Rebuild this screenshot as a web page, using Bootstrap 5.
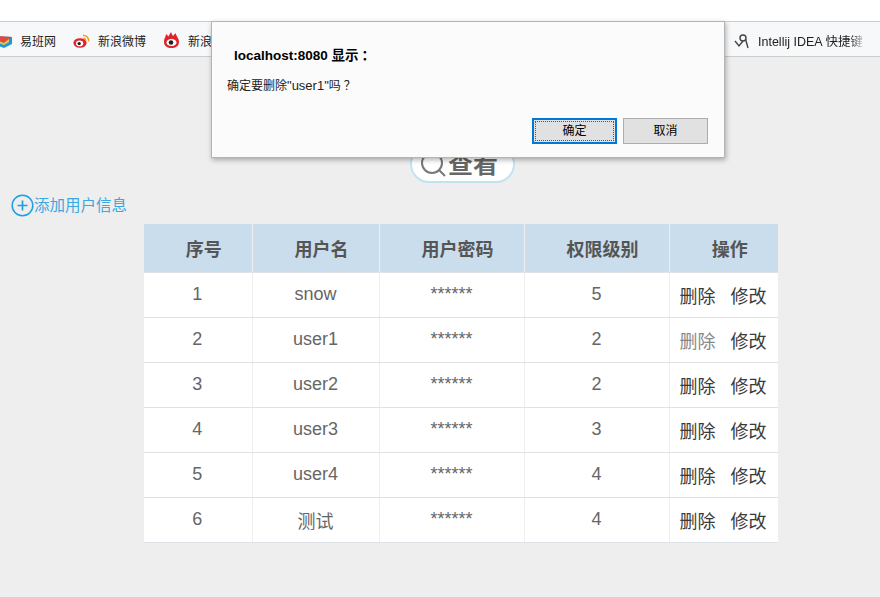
<!DOCTYPE html>
<html lang="zh">
<head>
<meta charset="utf-8">
<title>用户信息</title>
<link href="https://cdn.jsdelivr.net/npm/bootstrap@5.3.0/dist/css/bootstrap.min.css" rel="stylesheet">
<style>
html,body{height:100%}
body{background:#eee;font-family:"Liberation Sans","Noto Sans CJK SC",sans-serif;overflow:hidden;color:#555;width:880px;height:597px;position:relative}
.topstrip{height:21px;background:#fff}
.bmbar{height:36px;background:#f7f8fa;border-top:1px solid #ccc;border-bottom:1px solid #ccc;font-size:12px;color:#222;overflow:hidden;white-space:nowrap;position:relative}
.bmitem{position:absolute;top:0;height:34px;display:flex;align-items:center;gap:8px;padding-top:6px}
.bmitem svg{margin-top:-3px}
.bm1{left:-4px;gap:8px}.bm2{left:73px}.bm3{left:163px}.bm4{left:734px}
.idea{display:block;width:108px;overflow:hidden;font-size:12.500px;-webkit-mask-image:linear-gradient(to right,#000 85%,transparent 100%);mask-image:linear-gradient(to right,#000 85%,transparent 100%)}
.searchrow{padding-top:88px;height:146px}
.searchpill{margin-left:410px;width:105px;height:38px;border:2px solid #bfe4ef;border-radius:20px;background:#fff;color:#666;font-size:25px;font-weight:700;line-height:35px;display:flex;align-items:center;padding-left:8px;gap:1px}
.addlink{position:absolute;left:11px;top:194px;color:#3aa8e0;font-size:15.500px;line-height:22px;display:flex;align-items:center;gap:0;text-decoration:none}
.tblwrap{position:absolute;left:144px;top:224px;width:634px}
.utable{width:634px;margin:0;table-layout:fixed;border-collapse:collapse;background:#fff;color:#666;font-size:18px}
.utable th{background:#c9dded;height:48px;font-size:18px;font-weight:700;color:#555;text-align:center;vertical-align:middle;border-left:1px solid #eee;padding:5px 0 0 12px}
.utable td{height:45px;text-align:center;vertical-align:middle;border-left:1px solid #eee;border-top:1px solid #eee;padding:0 0 1px}
.utable th:first-child,.utable td:first-child{border-left:0}
.utable td.col1{padding-right:1px}
.utable td.cjkcell{padding:5px 0 0}
.utable td.ops{text-align:left;padding:5px 0 0 10px;color:#3a3a3a;white-space:nowrap}
.opgap{margin-left:15px}
.dimlink{color:#888}
.dlg{position:absolute;left:211px;top:21px;width:514px;height:137px;background:#fbfbfb;border:1px solid #b4b4b4;box-shadow:1px 2px 5px rgba(0,0,0,.3);color:#111;font-size:12px}
.dlgtitle{font-size:13.500px;font-weight:700;padding:25px 0 0 22px;line-height:18px;color:#000}
.dlgmsg{padding:12px 0 0 15px;line-height:18px;color:#222}
.latinmsg{font-size:13px;line-height:0}
.cjkpunct{font-family:"Noto Sans CJK TC",sans-serif;line-height:0;padding-left:3px}
.dlgbtns{position:absolute;right:16px;top:96px;display:flex;gap:6px}
.nbtn{width:85px;height:26px;background:#e1e1e1;border:1px solid #adadad;font-size:12px;color:#000;display:flex;align-items:center;justify-content:center;padding:0;border-radius:0;line-height:1}
.nbtn.pri{border:2px solid #0078d7;outline:1px dotted #555;outline-offset:-4px}
</style>
</head>
<body>
<div class="topstrip"></div>
<div class="bmbar">
  <div class="bmitem bm1">
    <svg width="16" height="16" viewBox="0 0 16 16"><path d="M0 3l16 1v7l-8 4-8-3z" fill="#1a9ad6"/><path d="M0 3l16 1-8 6-8-3z" fill="#e4483c"/><path d="M3 8l5 2 5-4v3l-5 3-5-2z" fill="#f2c14e"/></svg>
    <span>易班网</span>
  </div>
  <div class="bmitem bm2">
    <svg width="17" height="16" viewBox="0 0 17 16"><ellipse cx="7" cy="10" rx="6.600" ry="4.800" fill="#e0242c"/><ellipse cx="6.600" cy="10.400" rx="3.600" ry="2.800" fill="#fff"/><circle cx="6.200" cy="10.600" r="1.700" fill="#222"/><path d="M10 2.500a5 5 0 0 1 5.500 6" fill="none" stroke="#f0a020" stroke-width="1.600"/><path d="M10.500 5.300a2.200 2.200 0 0 1 2.300 2.400" fill="none" stroke="#f0a020" stroke-width="1.400"/></svg>
    <span>新浪微博</span>
  </div>
  <div class="bmitem bm3">
    <svg width="17" height="17" viewBox="0 0 17 17"><path d="M1 10C1 6 3 5 3 2c1.500 1 2 2 2.500 2.500C6 3 7 2 8 0c.8 2 1.500 3 2 4 1-1 1.800-2 2.500-3C13 4 16 6 16 10c0 4-3.500 6-7.500 6S1 14 1 10z" fill="#e0242c"/><ellipse cx="8.500" cy="10.500" rx="5" ry="3.600" fill="#fff"/><circle cx="8" cy="10.500" r="2.300" fill="#222"/></svg>
    <span>新浪</span>
  </div>
  <div class="bmitem bm4">
    <svg width="16" height="16" viewBox="0 0 16 16" fill="none" stroke="#444" stroke-width="1.400"><path d="M1 8l4 5 4-5"/><circle cx="9" cy="5" r="3"/><path d="M11.500 6l2.500 9"/></svg>
    <span class="idea">Intellij IDEA 快捷键</span>
  </div>
</div>
<div class="searchrow">
  <div class="searchpill">
    <svg width="27" height="27" viewBox="0 0 27 27" fill="none" stroke="#777" stroke-width="2"><circle cx="12" cy="12" r="10"/><path d="M19 19l6 6"/></svg>
    <span>查看</span>
  </div>
</div>
<a class="addlink" href="#">
  <svg width="23" height="23" viewBox="0 0 23 23" fill="none" stroke="#1f9fe0" stroke-width="1.500"><circle cx="11.500" cy="11.500" r="10.300"/><path d="M11.500 6.500v10M6.500 11.500h10" stroke-width="1.700"/></svg>
  <span>添加用户信息</span>
</a>
<div class="tblwrap">
<table class="table utable">
  <colgroup><col style="width:108px"><col style="width:127px"><col style="width:145px"><col style="width:145px"><col style="width:109px"></colgroup>
  <thead><tr><th>序号</th><th>用户名</th><th>用户密码</th><th>权限级别</th><th>操作</th></tr></thead>
  <tbody>
    <tr><td class="col1">1</td><td>snow</td><td>******</td><td>5</td><td class="ops">删除<span class="opgap">修改</span></td></tr>
    <tr><td class="col1">2</td><td>user1</td><td>******</td><td>2</td><td class="ops"><span class="dimlink">删除</span><span class="opgap">修改</span></td></tr>
    <tr><td class="col1">3</td><td>user2</td><td>******</td><td>2</td><td class="ops">删除<span class="opgap">修改</span></td></tr>
    <tr><td class="col1">4</td><td>user3</td><td>******</td><td>3</td><td class="ops">删除<span class="opgap">修改</span></td></tr>
    <tr><td class="col1">5</td><td>user4</td><td>******</td><td>4</td><td class="ops">删除<span class="opgap">修改</span></td></tr>
    <tr><td class="col1">6</td><td class="cjkcell">测试</td><td>******</td><td>4</td><td class="ops">删除<span class="opgap">修改</span></td></tr>
  </tbody>
</table>
</div>
<div class="dlg">
  <div class="dlgtitle">localhost:8080 显示<span class="cjkpunct">：</span></div>
  <div class="dlgmsg">确定要删除<span class="latinmsg">"user1"</span>吗<span class="cjkpunct">？</span></div>
  <div class="dlgbtns">
    <button class="nbtn pri" type="button">确定</button>
    <button class="nbtn" type="button">取消</button>
  </div>
</div>
<script src="https://cdn.jsdelivr.net/npm/bootstrap@5.3.0/dist/js/bootstrap.bundle.min.js"></script>
</body>
</html>
